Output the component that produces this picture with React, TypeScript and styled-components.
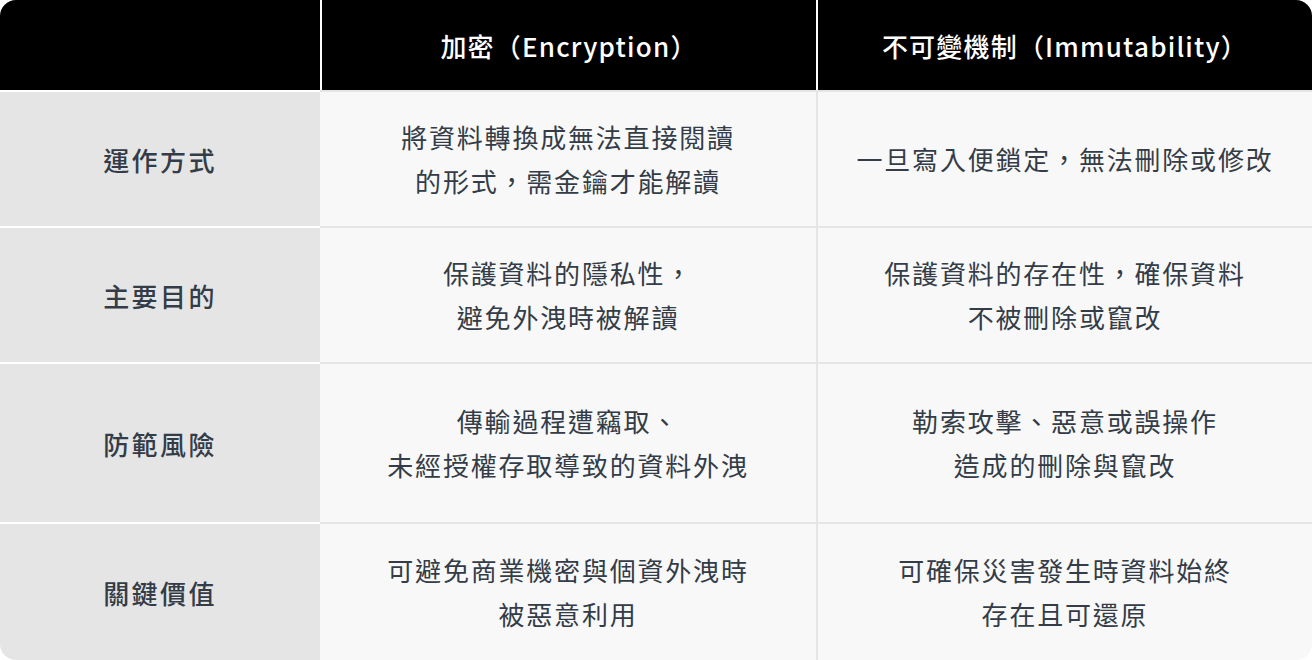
import styled, { createGlobalStyle } from 'styled-components';

const GlobalStyle = createGlobalStyle`
	html,
	body {
		margin: 0;
		padding: 0;
		background: #ffffff;
	}

	body {
		font-family: 'Noto Sans CJK TC', 'Noto Sans', sans-serif;
	}
`;

const Table = styled.div`
	width: 1312px;
	display: grid;
	grid-template-columns: 320px 1fr 1fr;
	grid-template-rows: 90px 136px 136px 160px 138px;
	border-radius: 16px;
	overflow: hidden;
`;

const HeadCell = styled.div<{ $first?: boolean }>`
	display: flex;
	align-items: center;
	justify-content: center;
	background: #000000;
	color: #ffffff;
	font-size: 26px;
	font-weight: 500;
	letter-spacing: 1.2px;
	border-left: ${(p) => (p.$first ? 'none' : '2px solid #ffffff')};
`;

const LabelCell = styled.div`
	display: flex;
	align-items: center;
	justify-content: center;
	background: #e5e5e5;
	border-top: 2px solid #ffffff;
	color: #333c47;
	font-size: 26px;
	font-weight: 500;
	letter-spacing: 2.4px;
`;

const DataCell = styled.div<{ $last?: boolean }>`
	display: flex;
	align-items: center;
	justify-content: center;
	text-align: center;
	background: #f8f8f8;
	border-top: 2px solid #e5e5e5;
	border-left: ${(p) => (p.$last ? '2px solid #e5e5e5' : 'none')};
	color: #333c47;
	font-size: 26px;
	line-height: 44px;
	letter-spacing: 1.8px;
`;

const rows = [
	{
		label: '運作方式',
		enc: ['將資料轉換成無法直接閱讀', '的形式，需金鑰才能解讀'],
		imm: ['一旦寫入便鎖定，無法刪除或修改'],
	},
	{
		label: '主要目的',
		enc: ['保護資料的隱私性，', '避免外洩時被解讀'],
		imm: ['保護資料的存在性，確保資料', '不被刪除或竄改'],
	},
	{
		label: '防範風險',
		enc: ['傳輸過程遭竊取、', '未經授權存取導致的資料外洩'],
		imm: ['勒索攻擊、惡意或誤操作', '造成的刪除與竄改'],
	},
	{
		label: '關鍵價值',
		enc: ['可避免商業機密與個資外洩時', '被惡意利用'],
		imm: ['可確保災害發生時資料始終', '存在且可還原'],
	},
];

const Lines = ({ lines }: { lines: string[] }) => (
	<div>
		{lines.map((l) => (
			<div key={l}>{l}</div>
		))}
	</div>
);

export default function App() {
	return (
		<>
			<GlobalStyle />
			<Table>
				<HeadCell $first />
				<HeadCell>加密（Encryption）</HeadCell>
				<HeadCell>不可變機制（Immutability）</HeadCell>
				{rows.map((r) => (
					<>
						<LabelCell key={r.label}>{r.label}</LabelCell>
						<DataCell>
							<Lines lines={r.enc} />
						</DataCell>
						<DataCell $last>
							<Lines lines={r.imm} />
						</DataCell>
					</>
				))}
			</Table>
		</>
	);
}
